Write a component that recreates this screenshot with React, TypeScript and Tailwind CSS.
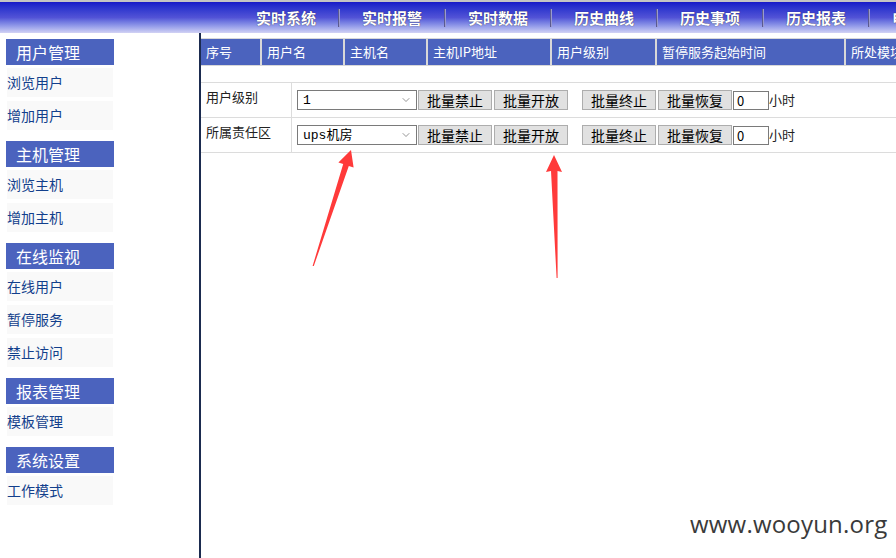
import { ChevronDown } from "lucide-react";

const nav = ["实时系统", "实时报警", "实时数据", "历史曲线", "历史事项", "历史报表", "电子地图"];

const groups = [
  { title: "用户管理", items: ["浏览用户", "增加用户"] },
  { title: "主机管理", items: ["浏览主机", "增加主机"] },
  { title: "在线监视", items: ["在线用户", "暂停服务", "禁止访问"] },
  { title: "报表管理", items: ["模板管理"] },
  { title: "系统设置", items: ["工作模式"] },
];

const cols = [
  { label: "序号", w: "w-[61px]" },
  { label: "用户名", w: "w-[83px]" },
  { label: "主机名", w: "w-[83px]" },
  { label: "主机IP地址", w: "w-[124px]" },
  { label: "用户级别", w: "w-[105px]" },
  { label: "暂停服务起始时间", w: "w-[189px]" },
  { label: "所处模块", w: "w-[120px]" },
];

function Btn({ children }: { children: string }) {
  return (
    <button className="w-[74px] h-[20px] bg-[#e1e1e1] border border-[#adadad] text-[14px] leading-none text-black flex items-center justify-center shrink-0">
      {children}
    </button>
  );
}

function FormRow({ label, value }: { label: string; value: string }) {
  return (
    <div className="flex h-[35px] border-b border-[#dcdcdc]">
      <div className="w-[91px] border-r border-[#dcdcdc] pl-[5px] pb-[6px] flex items-center text-[13px] text-[#222]">{label}</div>
      <div className="flex items-center pl-[5px]">
        <div className="w-[120px] h-[20px] border border-[#7a7a7a] flex items-center justify-between pl-[5px] pr-[4px] bg-white shrink-0">
          <span className="text-[13px] font-['Liberation_Mono','Noto_Sans_CJK_SC',monospace] text-black leading-none">{value}</span>
          <ChevronDown size={12} strokeWidth={1.25} className="text-[#555]" />
        </div>
        <div className="ml-[1px] flex gap-[2px]">
          <Btn>批量禁止</Btn>
          <Btn>批量开放</Btn>
        </div>
        <div className="ml-[14px] flex gap-[2px]">
          <Btn>批量终止</Btn>
          <Btn>批量恢复</Btn>
        </div>
        <div className="ml-[1px] w-[36px] h-[19px] border border-[#7a7a7a] flex items-center pl-[3px] text-[13px] leading-none">0</div>
        <span className="text-[13px] text-[#222]">小时</span>
      </div>
    </div>
  );
}

export default function App() {
  return (
    <div className="w-[896px] h-[558px] overflow-hidden relative bg-white font-['Noto_Sans_CJK_SC','Noto_Sans',sans-serif]">
      <header className="h-[33px] border-t-2 border-[#c4c4c4] bg-linear-to-b from-[#1818c8] via-[#5252d6] to-[#d2d2f4] flex items-center pl-[234px] whitespace-nowrap">
        {nav.map((n) => (
          <div key={n} className="flex items-center shrink-0">
            <div className="w-[104px] text-center text-white font-bold text-[15px] leading-none [text-shadow:0_0_1px_#223]">{n}</div>
            <div className="w-[2px] h-[18px] border-l border-[#5a5a90] border-r border-r-[#9a9ad0]" />
          </div>
        ))}
      </header>

      <div className="flex h-[525px]">
        <aside className="w-[201px] shrink-0 border-r-2 border-[#1b2b4f] pt-[6px] pl-[6px]">
          {groups.map((g) => (
            <div key={g.title} className="mb-[11px]">
              <div className="w-[108px] h-[26px] bg-[#4b63be] text-white text-[16px] leading-none flex items-center pl-[10px]">{g.title}</div>
              <div className="mt-[3px] flex flex-col gap-[4px]">
                {g.items.map((it) => (
                  <div key={it} className="ml-[1px] w-[106px] h-[29px] bg-[#f9f9f9] flex items-center text-[14px] text-[#123f8c]">{it}</div>
                ))}
              </div>
            </div>
          ))}
        </aside>

        <main className="flex-1 pt-[5px] overflow-hidden">
          <div className="flex h-[28px] bg-[#4b63be] border-y border-[#d8d8d8] whitespace-nowrap">
            {cols.map((c) => (
              <div key={c.label} className={`${c.w} shrink-0 border-r-2 border-[#d8d8d8] flex items-center pl-[5px] text-[13px] text-white`}>{c.label}</div>
            ))}
          </div>
          <div className="mt-[16px] border-t border-[#dcdcdc]">
            <FormRow label="用户级别" value="1" />
            <FormRow label="所属责任区" value="ups机房" />
          </div>
        </main>
      </div>

      <svg className="absolute inset-0 pointer-events-none" width="896" height="558">
        <polygon fill="#ff3a3a" points="351,150 353.6,167.5 348.8,166 313.8,266 312.6,266 343.2,164 338.4,162.5" />
        <polygon fill="#ff3a3a" points="554,155 562,172 557.5,171 557.6,278 556.6,278 551,171 546,172" />
      </svg>

      <div className="absolute left-[690px] top-[512px] text-[24px] text-[#3a3a3a] font-['Open_Sans',sans-serif] leading-none tracking-[0.2px]">www.wooyun.org</div>
    </div>
  );
}
